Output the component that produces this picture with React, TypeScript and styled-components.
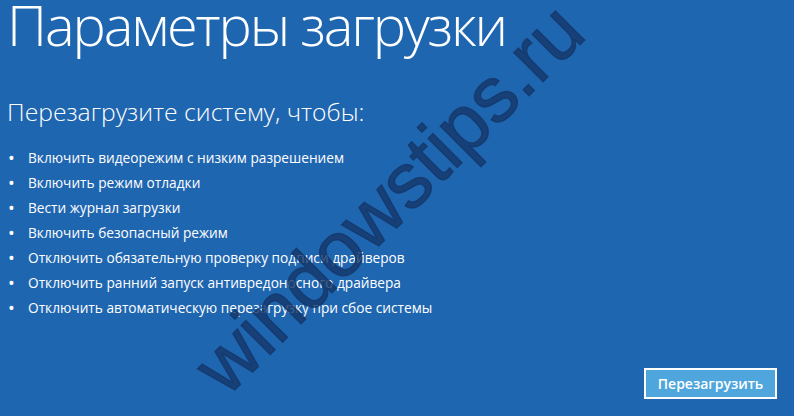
import React from 'react';
import styled, { createGlobalStyle } from 'styled-components';

const GlobalStyle = createGlobalStyle`
  html, body {
    margin: 0;
    padding: 0;
    background: #1f66b1;
  }
  body {
    font-family: "Open Sans", "Noto Sans", "DejaVu Sans", sans-serif;
    color: #ffffff;
  }
`;

const options = [
  'Включить видеорежим с низким разрешением',
  'Включить режим отладки',
  'Вести журнал загрузки',
  'Включить безопасный режим',
  'Отключить обязательную проверку подписи драйверов',
  'Отключить ранний запуск антивредоносного драйвера',
  'Отключить автоматическую перезагрузку при сбое системы',
];

const App = () => {
  return (
    <>
      <GlobalStyle />
      <Screen>
        <Title>Параметры загрузки</Title>
        <Subtitle>Перезагрузите систему, чтобы:</Subtitle>
        <OptionList>
          {options.map((text) => (
            <OptionItem key={text}>
              <Bullet>•</Bullet>
              {text}
            </OptionItem>
          ))}
        </OptionList>
        <Footer>
          <RestartButton type="button">Перезагрузить</RestartButton>
        </Footer>
        <Watermark>windowstips.ru</Watermark>
      </Screen>
    </>
  );
};

export default App;

const Screen = styled.div`
  position: relative;
  width: 794px;
  height: 416px;
  overflow: hidden;
  background: #1f66b1;
  display: flex;
  flex-direction: column;
  padding: 0 0 0 7px;
  box-sizing: border-box;
`;

const Title = styled.h1`
  margin: -10px 0 0 0;
  font-size: 56px;
  font-weight: 300;
  line-height: 68px;
  letter-spacing: -2.1px;
`;

const Subtitle = styled.h2`
  margin: 39px 0 0 0;
  font-size: 24.7px;
  font-weight: 300;
  line-height: 30px;
`;

const OptionList = styled.ul`
  list-style: none;
  margin: 18px 0 0 0;
  padding: 0;
`;

const OptionItem = styled.li`
  display: flex;
  align-items: center;
  height: 25px;
  font-size: 13.7px;
  font-weight: 400;
`;

const Bullet = styled.span`
  width: 20px;
  padding-left: 1px;
  font-size: 18px;
  line-height: 1;
`;

const Footer = styled.div`
  display: flex;
  justify-content: flex-end;
  margin-top: auto;
  padding: 0 17px 17px 0;
`;

const RestartButton = styled.button`
  width: 133px;
  height: 31px;
  border: 2px solid #ffffff;
  background: #4fa6dc;
  color: #ffffff;
  font-family: "Open Sans", "Noto Sans", sans-serif;
  font-size: 14px;
  font-weight: 600;
  padding: 0;
  cursor: pointer;
`;

const Watermark = styled.div`
  position: absolute;
  left: 133px;
  top: 153px;
  font-family: "Liberation Sans", Arial, sans-serif;
  font-size: 78px;
  color: rgba(20, 55, 105, 0.8);
  -webkit-text-stroke: 1.4px rgba(20, 55, 105, 0.8);
  transform: rotate(-45deg);
  transform-origin: center;
  white-space: nowrap;
  pointer-events: none;
`;
